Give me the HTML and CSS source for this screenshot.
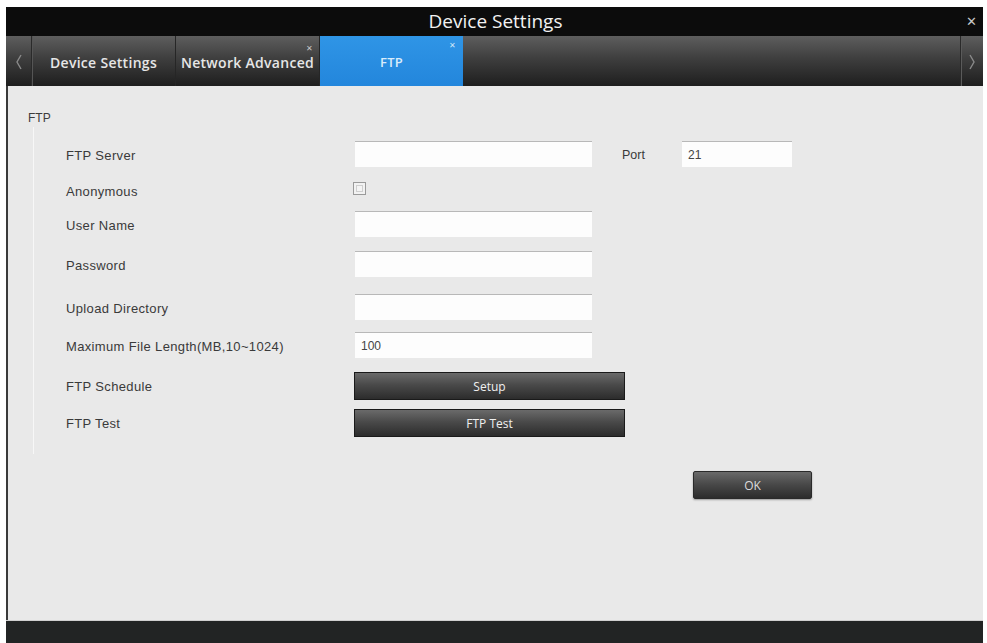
FILE: index.html
```html
<!DOCTYPE html>
<html>
<head>
<meta charset="utf-8">
<link rel="stylesheet" href="styles.css">
</head>
<body>
<div class="window">
  <div class="titlebar">
    <span class="title">Device Settings</span>
    <span class="close">&#x2715;</span>
  </div>
  <div class="tabbar">
    <div class="arrow arrow-left">
      <svg width="8" height="16" viewBox="0 0 8 16"><polyline points="6,1 2,8 6,15" fill="none" stroke="#8a8a8a" stroke-width="1.4"/></svg>
    </div>
    <div class="tab">Device Settings</div>
    <div class="tab">Network Advanced<span class="tab-x">&#x2715;</span></div>
    <div class="tab active">FTP<span class="tab-x">&#x2715;</span></div>
    <div class="tab-fill"></div>
    <div class="arrow arrow-right">
      <svg width="8" height="16" viewBox="0 0 8 16"><polyline points="2,1 6,8 2,15" fill="none" stroke="#8a8a8a" stroke-width="1.4"/></svg>
    </div>
  </div>
  <div class="content">
    <div class="legend">FTP</div>
    <div class="group">
      <div class="form">
        <div class="label">FTP Server</div>
        <div class="field">
          <div class="input"></div>
          <span class="port-label">Port</span>
          <div class="input port">21</div>
        </div>
        <div class="label">Anonymous</div>
        <div class="field"><span class="checkbox"></span></div>
        <div class="label">User Name</div>
        <div class="field"><div class="input"></div></div>
        <div class="label">Password</div>
        <div class="field"><div class="input"></div></div>
        <div class="label">Upload Directory</div>
        <div class="field"><div class="input"></div></div>
        <div class="label">Maximum File Length(MB,10~1024)</div>
        <div class="field"><div class="input">100</div></div>
        <div class="label">FTP Schedule</div>
        <div class="field"><div class="btn wide">Setup</div></div>
        <div class="label">FTP Test</div>
        <div class="field"><div class="btn wide">FTP Test</div></div>
      </div>
    </div>
    <div class="actions"><div class="btn ok">OK</div></div>
  </div>
  <div class="footer"></div>
</div>
</body>
</html>
```
FILE: styles.css
```css
html, body {
  margin: 0;
  padding: 0;
  background: #ffffff;
}
.window {
  margin: 7px 0 0 6px;
  width: 977px;
  height: 636px;
  display: flex;
  flex-direction: column;
  font-family: "Liberation Sans", Arial, sans-serif;
}
.titlebar {
  height: 29px;
  background: #0c0c0c;
  display: flex;
  align-items: center;
  justify-content: center;
  position: relative;
}
.title {
  color: #f2f2f2;
  font-family: "Open Sans", "Noto Sans", sans-serif;
  font-size: 19px;
  margin-left: 2px;
  margin-top: -1px;
}
.close {
  position: absolute;
  right: 6px;
  top: 7px;
  color: #c8c8c8;
  font-size: 13px;
  font-weight: bold;
  font-family: "DejaVu Sans", sans-serif;
}
.tabbar {
  height: 50px;
  display: flex;
  background: linear-gradient(#5e5e5e, #3e3e3e 45%, #1e1e1e);
}
.arrow {
  width: 25px;
  display: flex;
  align-items: center;
  justify-content: center;
}
.arrow-left {
  border-right: 1px solid #2a2a2a;
  box-shadow: 1px 0 0 #555;
  padding-top: 2px;
}
.arrow-right {
  width: 22px;
  border-left: 1px solid #2a2a2a;
  box-shadow: inset 1px 0 0 #5a5a5a;
  padding-top: 2px;
}
.tab {
  width: 144px;
  display: flex;
  align-items: center;
  justify-content: center;
  color: #e6e6e6;
  font-family: "Open Sans", "Noto Sans", sans-serif;
  font-weight: 600;
  font-size: 14px;
  letter-spacing: 0.3px;
  border-right: 1px solid #262626;
  position: relative;
  padding-top: 2px;
  box-sizing: border-box;
  white-space: nowrap;
}
.tab:first-of-type {
  width: 145px;
}
.tab.active {
  width: 143px;
  background: linear-gradient(#2f95e6, #2386dc);
  color: #d9ecfb;
  border-right: none;
  font-size: 13px;
}
.tab-x {
  position: absolute;
  top: 8px;
  right: 6px;
  font-size: 8px;
  font-weight: bold;
  color: #c8c8c8;
  font-family: "DejaVu Sans", sans-serif;
}
.tab.active .tab-x {
  color: #cfe6f8;
  top: 5px;
  right: 7px;
}
.tab-fill {
  flex: 1;
}
.content {
  flex: 1;
  background: #e9e9e9;
  border-left: 2px solid #3a3a3a;
  padding-top: 25px;
  box-sizing: border-box;
}
.legend {
  font-size: 12px;
  color: #3c3c3c;
  margin-left: 20px;
  height: 16px;
}
.group {
  margin-left: 25px;
  border-left: 1px solid #f7f7f7;
  padding: 14px 0 16px 32px;
  width: 600px;
}
.form {
  display: grid;
  grid-template-columns: 289px auto;
  grid-template-rows: 36px 34px 40px 43px 38px 40px 37px 29px;
}
.label {
  height: 26px;
  padding-top: 3px;
  box-sizing: border-box;
  display: flex;
  align-items: center;
  font-size: 13px;
  letter-spacing: 0.35px;
  color: #3a3a3a;
  white-space: nowrap;
}
.field {
  display: flex;
  align-items: flex-start;
}
.input {
  width: 237px;
  background: #fdfdfd;
  border-top: 1px solid #b8b8b8;
  font-size: 12px;
  color: #444;
  display: flex;
  align-items: center;
  padding-left: 6px;
  box-sizing: border-box;
  height: 26px;
}
.input.port {
  width: 110px;
}
.port-label {
  width: 60px;
  margin-left: 30px;
  height: 26px;
  padding-top: 2px;
  box-sizing: border-box;
  display: flex;
  align-items: center;
  font-size: 12.5px;
  color: #3a3a3a;
}
.checkbox {
  margin-top: 5px;
  margin-left: -2px;
  width: 11px;
  height: 11px;
  border: 1px solid #9a9a9a;
  box-shadow: inset 0 0 0 2px #f2f2f2, inset 0 0 0 3px #cfcfcf;
  background: #f4f4f4;
}
.btn {
  height: 28px;
  box-sizing: border-box;
  border: 1px solid #1a1a1a;
  background: linear-gradient(#6a6a6a, #4a4a4a 45%, #2c2c2c);
  color: #f0f0f0;
  font-family: "Open Sans", "Noto Sans", sans-serif;
  font-size: 12px;
  display: flex;
  align-items: center;
  justify-content: center;
}
.btn.wide {
  width: 271px;
  margin-left: -1px;
}
.actions {
  display: flex;
  margin-left: 685px;
  margin-top: 17px;
}
.btn.ok {
  width: 119px;
  height: 28px;
  border-radius: 2px;
  border-color: #2a2a2a;
  box-shadow: 0 1px 2px rgba(0,0,0,0.35);
  color: #dcdcdc;
}
.footer {
  height: 22px;
  background: #222424;
  border-top: 1px solid #cfcfcf;
}
```
